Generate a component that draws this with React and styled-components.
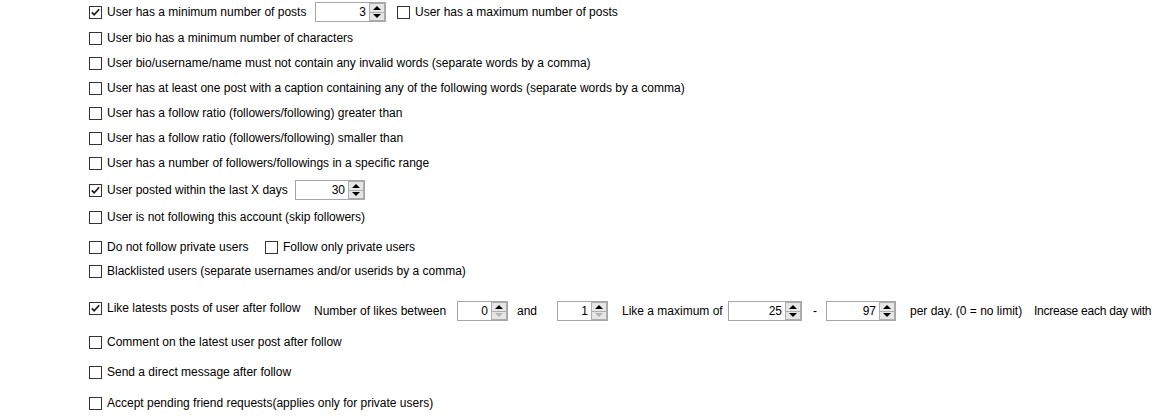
import React from 'react';
import styled, { createGlobalStyle } from 'styled-components';

const Global = createGlobalStyle`
  html, body {
    margin: 0;
    background: #fff;
    overflow: hidden;
  }
  body {
    font-family: 'Liberation Sans', Arial, sans-serif;
    font-size: 12px;
    color: #000;
  }
`;

const Page = styled.div`
  width: 1154px;
  height: 419px;
  padding-left: 89px;
  box-sizing: border-box;
`;

const Row = styled.div`
  display: flex;
  align-items: center;
  height: ${p => p.$h || 24}px;
  margin-top: ${p => p.$mt || 0}px;
  white-space: nowrap;
`;

const Label = styled.label`
  display: flex;
  align-items: center;
  flex: none;
  width: ${p => (p.$w ? `${p.$w}px` : 'auto')};
  margin-left: ${p => p.$ml || 0}px;
  align-self: ${p => (p.$top ? 'flex-start' : 'auto')};
  margin-top: ${p => (p.$top ? `${p.$top}px` : 0)};
`;

const Box = styled.span`
  width: 13px;
  height: 13px;
  box-sizing: border-box;
  border: 1px solid #333;
  background: #fff;
  margin-right: 5px;
  display: flex;
  align-items: center;
  justify-content: center;
  flex: none;
`;

const Text = styled.span`
  flex: none;
  width: ${p => (p.$w ? `${p.$w}px` : 'auto')};
  margin-left: ${p => p.$ml || 0}px;
  letter-spacing: ${p => (p.$tight ? '-0.25px' : 'normal')};
`;

const Spinner = styled.div`
  display: flex;
  flex: none;
  width: ${p => p.$w}px;
  height: 20px;
  box-sizing: border-box;
  border: 1px solid #a6a6a6;
  background: #fff;
  margin-left: ${p => p.$ml || 0}px;
`;

const Value = styled.span`
  flex: 1;
  text-align: right;
  padding-right: 3px;
  line-height: 18px;
`;

const Buttons = styled.div`
  width: 16px;
  display: flex;
  flex-direction: column;
`;

const SpinBtn = styled.span`
  flex: 1;
  display: flex;
  align-items: center;
  justify-content: center;
  background: #e6e6e6;
  border: 1px solid #adadad;
  box-sizing: border-box;
  & + & {
    border-top: none;
  }
  svg {
    fill: ${p => (p.$off ? '#b4b4b4' : '#000')};
  }
`;

const Check = ({ on, children, w, ml, top }) => (
  <Label $w={w} $ml={ml} $top={top}>
    <Box>
      {on && (
        <svg width="11" height="11" viewBox="0 0 11 11">
          <path d="M1.8 5.3 L4.2 7.8 L9.2 2.2" fill="none" stroke="#1a1a1a" strokeWidth="1.7" />
        </svg>
      )}
    </Box>
    {children}
  </Label>
);

const Arrow = ({ down }) => (
  <svg width="8" height="4" viewBox="0 0 8 4" style={down ? { transform: 'rotate(180deg)' } : undefined}>
    <path d="M4 0 L8 4 L0 4 Z" />
  </svg>
);

const Num = ({ value, w, ml, downOff }) => (
  <Spinner $w={w} $ml={ml}>
    <Value>{value}</Value>
    <Buttons>
      <SpinBtn>
        <Arrow />
      </SpinBtn>
      <SpinBtn $off={downOff}>
        <Arrow down />
      </SpinBtn>
    </Buttons>
  </Spinner>
);

const App = () => (
  <Page>
    <Global />
    <Row>
      <Check on w={226}>User has a minimum number of posts</Check>
      <Num value="3" w={71} />
      <Check ml={11}>User has a maximum number of posts</Check>
    </Row>
    <Row $mt={2}>
      <Check>User bio has a minimum number of characters</Check>
    </Row>
    <Row $mt={1}>
      <Check>User bio/username/name must not contain any invalid words (separate words by a comma)</Check>
    </Row>
    <Row $mt={1}>
      <Check>User has at least one post with a caption containing any of the following words (separate words by a comma)</Check>
    </Row>
    <Row $mt={1}>
      <Check>User has a follow ratio (followers/following) greater than</Check>
    </Row>
    <Row $mt={1}>
      <Check>User has a follow ratio (followers/following) smaller than</Check>
    </Row>
    <Row $mt={1}>
      <Check>User has a number of followers/followings in a specific range</Check>
    </Row>
    <Row $mt={3}>
      <Check on w={206}>User posted within the last X days</Check>
      <Num value="30" w={70} />
    </Row>
    <Row $mt={3}>
      <Check>User is not following this account (skip followers)</Check>
    </Row>
    <Row $mt={6}>
      <Check w={176}>Do not follow private users</Check>
      <Check>Follow only private users</Check>
    </Row>
    <Row>
      <Check>Blacklisted users (separate usernames and/or userids by a comma)</Check>
    </Row>
    <Row $mt={12} $h={32}>
      <Check on w={225} top={6}>Like latests posts of user after follow</Check>
      <Text $w={143}>Number of likes between</Text>
      <Num value="0" w={51} downOff />
      <Text $ml={9} $w={40}>and</Text>
      <Num value="1" w={51} downOff />
      <Text $ml={14} $w={106}>Like a maximum of</Text>
      <Num value="25" w={74} />
      <Text $ml={11} $w={13}>-</Text>
      <Num value="97" w={70} />
      <Text $ml={14} $w={124}>per day. (0 = no limit)</Text>
      <Text $tight>Increase each day with</Text>
    </Row>
    <Row $mt={3}>
      <Check>Comment on the latest user post after follow</Check>
    </Row>
    <Row $mt={6}>
      <Check>Send a direct message after follow</Check>
    </Row>
    <Row $mt={7}>
      <Check>Accept pending friend requests(applies only for private users)</Check>
    </Row>
  </Page>
);

export default App;
